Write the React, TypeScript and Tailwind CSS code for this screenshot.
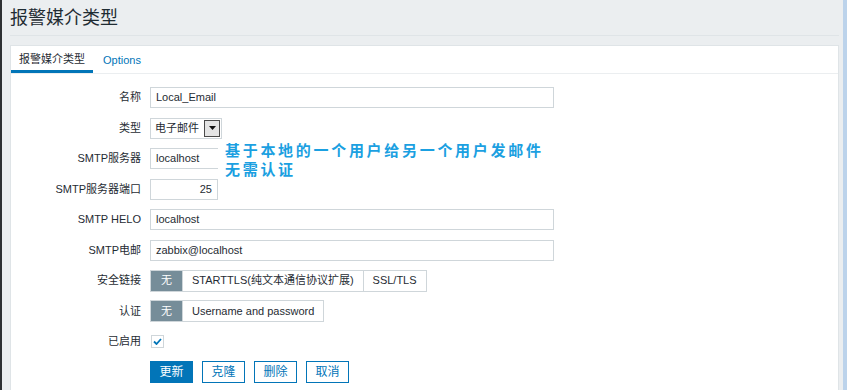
import { useState } from 'react';

const font = { fontFamily: '"Liberation Sans", Arial, "Noto Sans CJK SC", sans-serif' };

function Row({ label, children }: { label: string; children: React.ReactNode }) {
  return (
    <div className="flex items-center h-[21px]">
      <div className="w-[131px] text-right text-[11px] text-[#1f2c33] pr-[1px]">{label}</div>
      <div className="ml-[8px] flex items-center h-full">{children}</div>
    </div>
  );
}

function TextInput({ value, width, right }: { value: string; width: string; right?: boolean }) {
  return (
    <div
      className={`${width} h-[21px] border border-[#cfd6da] bg-white flex items-center px-[5px] text-[11px] text-[#1f2c33] ${
        right ? 'justify-end' : ''
      }`}
    >
      {value}
    </div>
  );
}

function Segmented({ options, active }: { options: string[]; active: number }) {
  return (
    <div className="flex h-[22px] border border-[#cfd6da]">
      {options.map((opt, i) => (
        <div
          key={opt}
          className={`flex items-center justify-center text-[11px] ${
            i === active ? 'bg-[#768d99] text-white w-[31px]' : 'bg-white text-[#1f2c33] px-[9px] border-l border-[#cfd6da]'
          }`}
        >
          {opt}
        </div>
      ))}
    </div>
  );
}

export default function App() {
  const [enabled] = useState(true);

  return (
    <div className="w-[847px] h-[390px] overflow-hidden flex bg-[#ebeef0]" style={font}>
      <div className="w-[2px] bg-[#2e3133]" />

      <div className="flex-1 pl-[8px] pr-[4px] flex flex-col">
        {/* page title */}
        <div className="h-[36px] border-b border-[#dfe4e7] pt-[6px]">
          <h1 className="text-[18px] leading-[24px] text-[#1f2c33]">报警媒介类型</h1>
        </div>

        <div className="mt-[9px] flex-1 bg-white border border-[#dfe4e7] border-b-0 relative">
          {/* tabs */}
          <div className="flex h-[28px] border-b border-[#ebeef0]">
            <div className="px-[8px] flex items-center text-[11px] text-[#1f2c33] border-b-[3px] border-[#0275b8] pt-[2px]">
              报警媒介类型
            </div>
            <div className="ml-[2px] px-[8px] flex items-center text-[11px] text-[#0275b8] pt-[2px]">Options</div>
          </div>

          {/* form */}
          <div className="pt-[13px] flex flex-col gap-[9.5px]">
            <Row label="名称">
              <TextInput value="Local_Email" width="w-[404px]" />
            </Row>
            <Row label="类型">
              <div className="w-[72px] h-[21px] border border-[#cfd6da] bg-white flex items-center pl-[4px] pr-[1px] text-[11px] text-[#1f2c33]">
                <span className="flex-1">电子邮件</span>
                <div className="w-[16px] h-[17px] border border-[#4a4a4a] bg-[#e4e4e4] flex items-center justify-center">
                  <svg width="7" height="4" viewBox="0 0 7 4">
                    <path d="M0 0 L7 0 L3.5 4 Z" fill="#111" />
                  </svg>
                </div>
              </div>
            </Row>
            <Row label="SMTP服务器">
              <TextInput value="localhost" width="w-[404px]" />
            </Row>
            <Row label="SMTP服务器端口">
              <TextInput value="25" width="w-[68px]" right />
            </Row>
            <Row label="SMTP HELO">
              <TextInput value="localhost" width="w-[404px]" />
            </Row>
            <Row label="SMTP电邮">
              <TextInput value="zabbix@localhost" width="w-[404px]" />
            </Row>
            <Row label="安全链接">
              <Segmented options={['无', 'STARTTLS(纯文本通信协议扩展)', 'SSL/TLS']} active={0} />
            </Row>
            <Row label="认证">
              <Segmented options={['无', 'Username and password']} active={0} />
            </Row>
            <Row label="已启用">
              <div className="w-[13px] h-[13px] border border-[#cfd6da] bg-white flex items-center justify-center ml-[1px]">
                {enabled && (
                  <svg width="9" height="7" viewBox="0 0 9 7">
                    <path d="M1 3.5 L3.5 6 L8 1" stroke="#0275b8" strokeWidth="1.8" fill="none" />
                  </svg>
                )}
              </div>
            </Row>
            <div className="flex pl-[139px] gap-[9px] -mt-[1px]">
              <button className="w-[43px] h-[22px] bg-[#0275b8] text-white text-[12px]">更新</button>
              <button className="w-[43px] h-[22px] border border-[#0275b8] text-[#0275b8] text-[12px] bg-white">克隆</button>
              <button className="w-[43px] h-[22px] border border-[#0275b8] text-[#0275b8] text-[12px] bg-white">删除</button>
              <button className="w-[43px] h-[22px] border border-[#0275b8] text-[#0275b8] text-[12px] bg-white">取消</button>
            </div>
          </div>

          {/* pasted annotation */}
          <div
            className="absolute left-[207px] top-[94px] w-[340px] h-[37px] bg-white pl-[7px] text-[15px] leading-[19px] font-bold text-[#1ba0e1] tracking-[2.7px]"
            style={{ fontFamily: '"Noto Sans CJK SC", sans-serif' }}
          >
            <div>基于本地的一个用户给另一个用户发邮件</div>
            <div>无需认证</div>
          </div>
        </div>
      </div>

      <div className="w-[4px] bg-[#bcd3eb]" />
    </div>
  );
}
